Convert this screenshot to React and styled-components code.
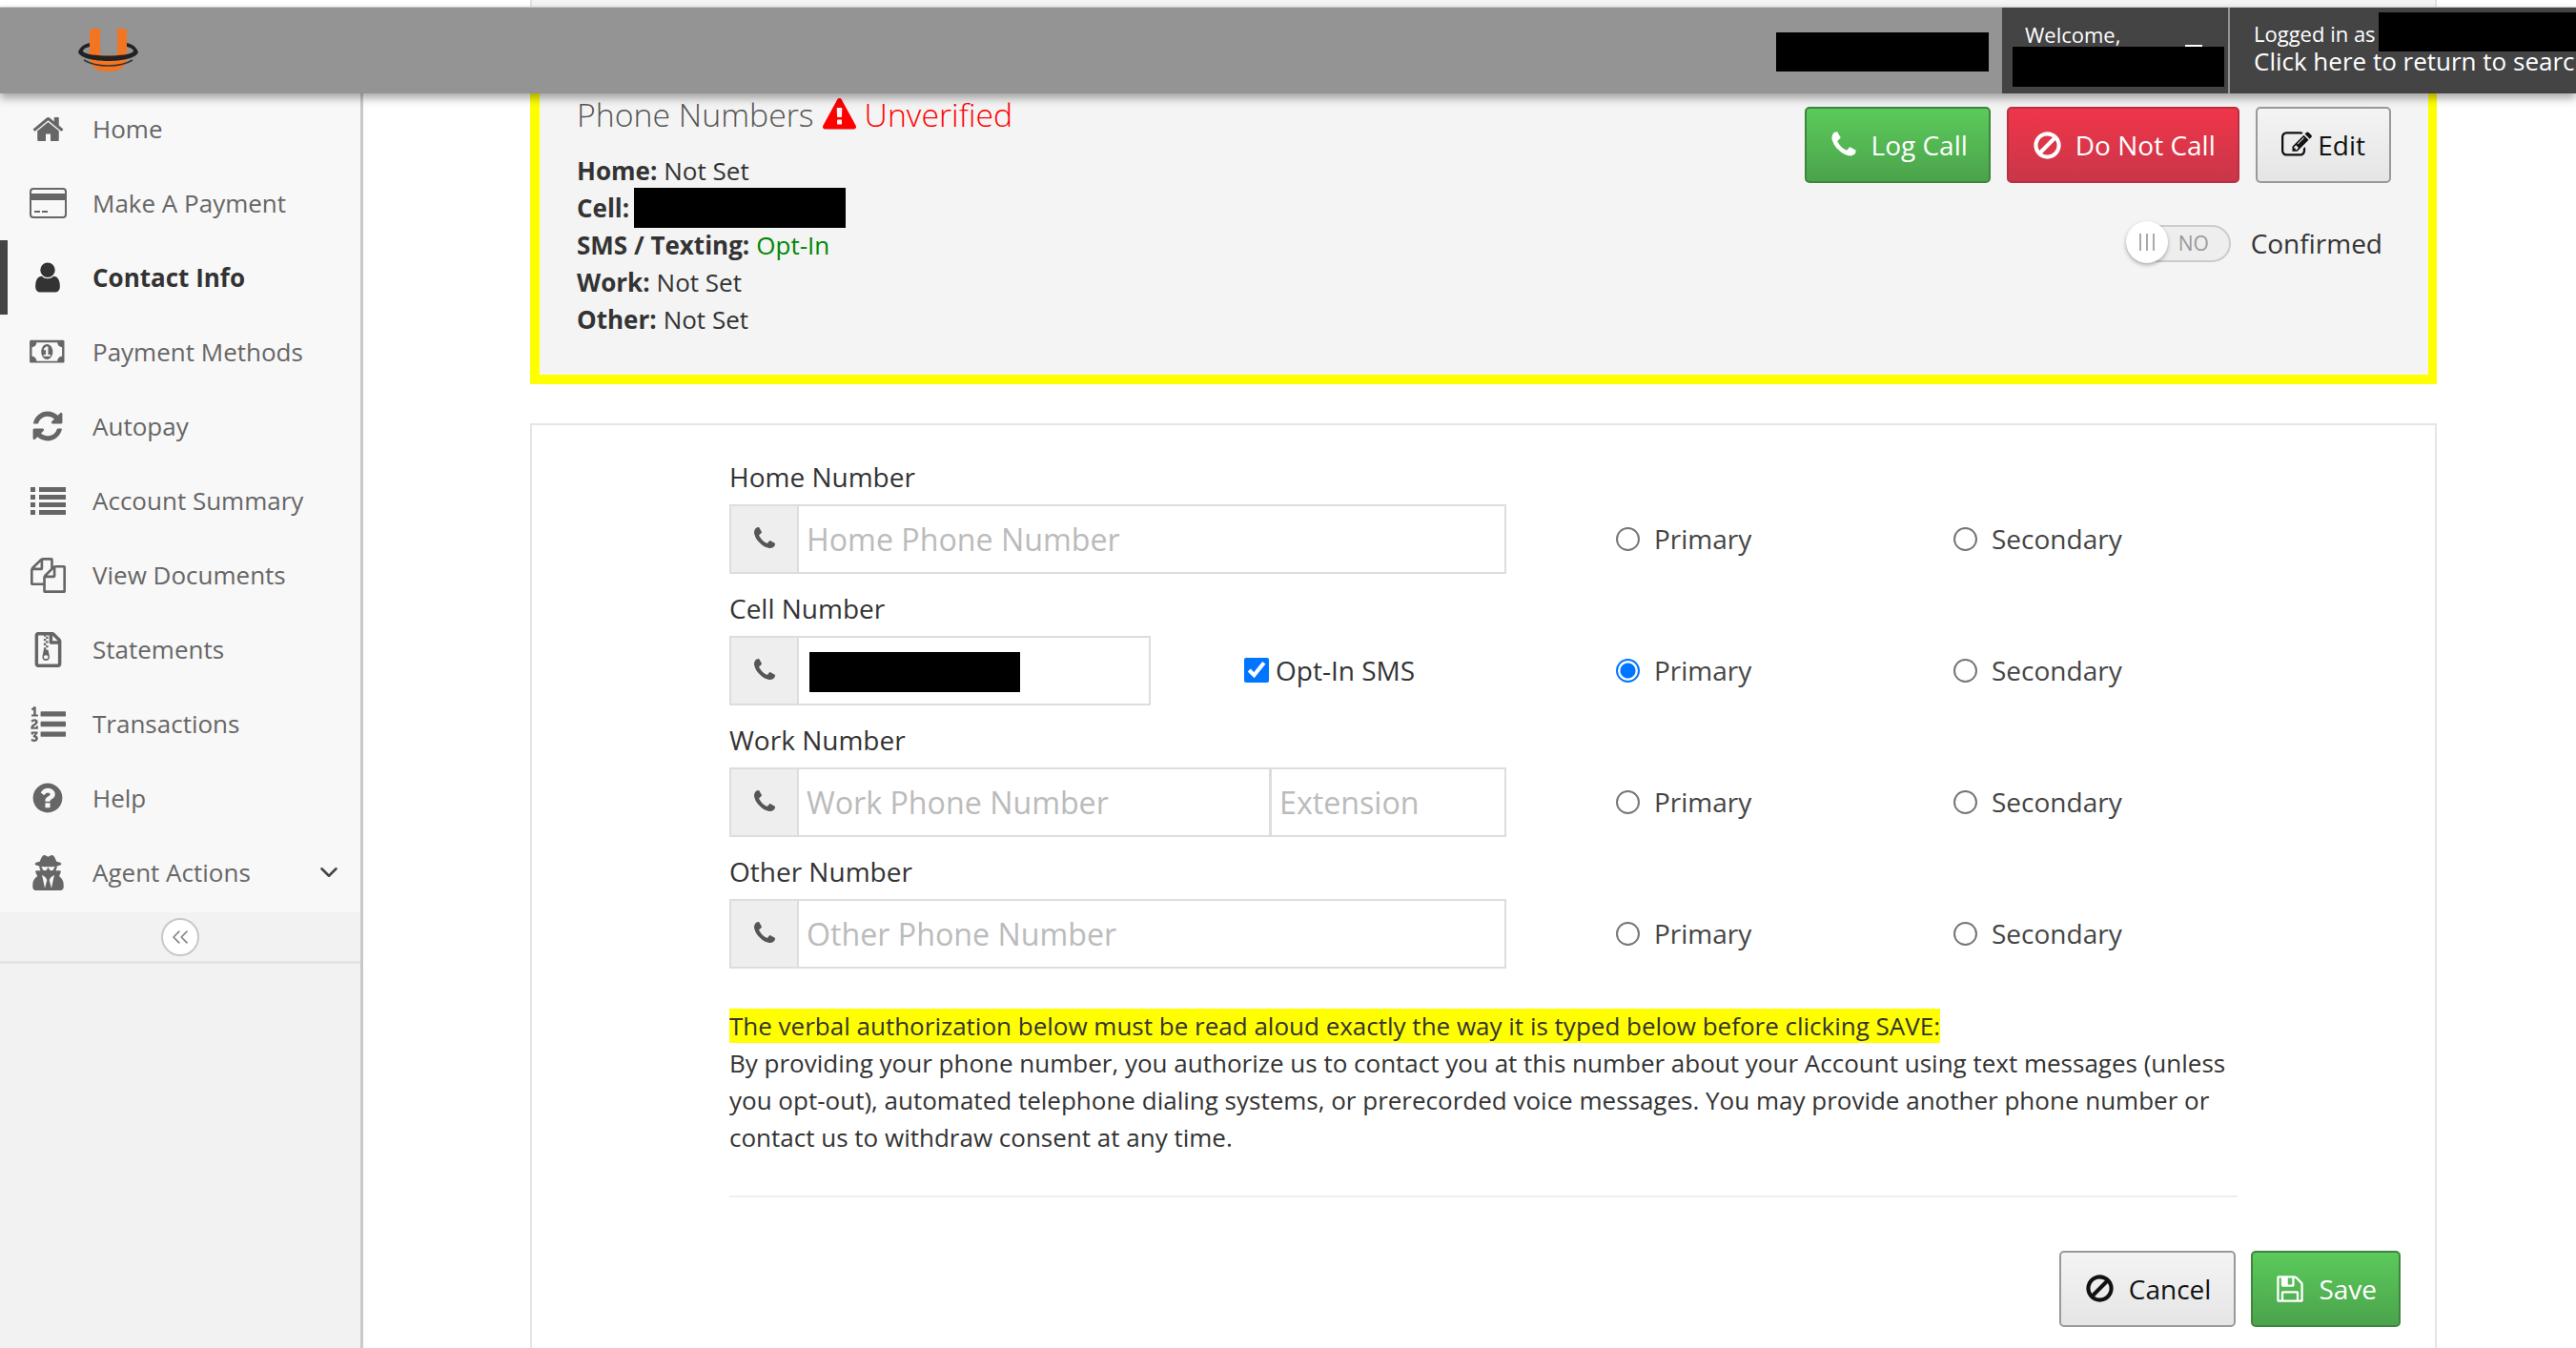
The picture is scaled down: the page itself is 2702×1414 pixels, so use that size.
import React from 'react'
import styled, { createGlobalStyle } from 'styled-components'
import { FaRegFileArchive, FaUserSecret } from 'react-icons/fa'
import { ChevronDown, ChevronsLeft } from 'lucide-react'

const GlobalStyle = createGlobalStyle`
  html, body {
    margin: 0;
    height: 1414px;
    overflow: hidden;
    background: #fff;
    font-family: "Open Sans", sans-serif;
    font-size: 28px;
    color: #333;
  }
  * { box-sizing: border-box; }
`

const Fa4 = ({ d, size = 32, color = 'currentColor' }) => (
  <svg width={size} height={size} viewBox="0 0 1792 1792" fill={color}>
    <path d={d} />
  </svg>
)

const paths = {
  home: 'M1472 992v480q0 26-19 45t-45 19h-384v-384h-256v384h-384q-26 0-45-19t-19-45v-480q0-1 .5-3t.5-3l575-474 575 474q1 2 1 6zm223-69l-62 74q-8 9-21 11h-3q-13 0-21-7l-692-577-692 577q-12 8-24 7-13-2-21-11l-62-74q-8-10-7-23.5t11-21.5l719-599q32-26 76-26t76 26l244 204v-195q0-14 9-23t23-9h192q14 0 23 9t9 23v408l219 182q10 8 11 21.5t-7 23.5z',
  user: 'M1536 1399q0 109-62.5 187t-150.5 78h-854q-88 0-150.5-78t-62.5-187q0-85 8.5-160.5t31.5-152 58.5-131 94-89 134.5-34.5q131 128 313 128t313-128q76 0 134.5 34.5t94 89 58.5 131 31.5 152 8.5 160.5zm-256-887q0 159-112.5 271.5t-271.5 112.5-271.5-112.5-112.5-271.5 112.5-271.5 271.5-112.5 271.5 112.5 112.5 271.5z',
  refresh: 'M1639 1056q0 5-1 7-64 268-268 434.5t-478 166.5q-146 0-282.5-55t-243.5-157l-129 129q-19 19-45 19t-45-19-19-45v-448q0-26 19-45t45-19h448q26 0 45 19t19 45-19 45l-137 137q71 66 161 102t187 36q134 0 250-65t186-179q11-17 53-117 8-23 30-23h192q13 0 22.5 9.5t9.5 22.5zm25-800v448q0 26-19 45t-45 19h-448q-26 0-45-19t-19-45 19-45l138-138q-148-137-349-137-134 0-250 65t-186 179q-11 17-53 117-8 23-30 23h-199q-13 0-22.5-9.5t-9.5-22.5v-7q65-268 270-434.5t480-166.5q146 0 284 55.5t245 156.5l130-129q19-19 45-19t45 19 19 45z',
  help: 'M1024 1376v-192q0-14-9-23t-23-9h-192q-14 0-23 9t-9 23v192q0 14 9 23t23 9h192q14 0 23-9t9-23zm256-672q0-88-55.5-163t-138.5-116-170-41q-243 0-371 213-15 24 8 42l132 100q7 6 19 6 16 0 25-12 53-68 86-92 34-24 86-24 48 0 85.5 26t37.5 59q0 38-20 61t-68 45q-63 28-115.5 86.5t-52.5 125.5v36q0 14 9 23t23 9h192q14 0 23-9t9-23q0-19 21.5-49.5t54.5-49.5q32-18 49-28.5t46-35 44.5-48 28-60.5 12.5-81zm384 192q0 209-103 385.5t-279.5 279.5-385.5 103-385.5-103-279.5-279.5-103-385.5 103-385.5 279.5-279.5 385.5-103 385.5 103 279.5 279.5 103 385.5z',
  ban: 'M1440 893q0-161-87-295l-754 753q137 89 297 89 111 0 211.5-43.5t173.5-116.5 116-174.5 43-212.5zm-999 299l755-754q-135-91-300-91-148 0-273 73t-198 199-73 274q0 162 89 299zm1223-299q0 157-61 300t-163.5 246-245 164-298.5 61-298.5-61-245-164-163.5-246-61-300 61-299.5 163.5-245.5 245-164 298.5-61 298.5 61 245 164 163.5 245.5 61 299.5z',
  edit: 'M888 1184l116-116-152-152-116 116v56h96v96h56zm440-720q-16-16-33 1l-350 350q-17 17-1 33t33-1l350-350q17-17 1-33zm80 594v190q0 119-84.5 203.5t-203.5 84.5h-832q-119 0-203.5-84.5t-84.5-203.5v-832q0-119 84.5-203.5t203.5-84.5h832q63 0 117 25 15 7 18 23 3 17-9 29l-49 49q-14 14-32 8-23-6-45-6h-832q-66 0-113 47t-47 113v832q0 66 47 113t113 47h832q66 0 113-47t47-113v-126q0-13 9-22l64-64q15-15 35-7t20 29zm-96-738l288 288-672 672h-288v-288zm444 132l-92 92-288-288 92-92q28-28 68-28t68 28l152 152q28 28 28 68t-28 68z',
  warning: 'M1024 1375v-190q0-14-9.5-23.5t-22.5-9.5h-192q-13 0-22.5 9.5t-9.5 23.5v190q0 14 9.5 23.5t22.5 9.5h192q13 0 22.5-9.5t9.5-23.5zm-2-374l18-459q0-12-10-19-13-11-24-11h-220q-11 0-24 11-10 7-10 21l17 457q0 10 10 16.5t24 6.5h185q14 0 23.5-6.5t10.5-16.5zm-14-934l768 1408q35 63-2 126-17 29-46.5 46t-63.5 17h-1536q-34 0-63.5-17t-46.5-46q-37-63-2-126l768-1408q17-31 47-49t65-18 65 18 47 49z',
  copy: 'M1696 384q40 0 68 28t28 68v1216q0 40-28 68t-68 28h-960q-40 0-68-28t-28-68v-288h-544q-40 0-68-28t-28-68v-672q0-40 20-88t48-76l408-408q28-28 76-48t88-20h416q40 0 68 28t28 68v328q68-40 128-40h416zm-544 213l-299 299h299v-299zm-640-384l-299 299h299v-299zm196 647l316-316v-416h-384v416q0 40-28 68t-68 28h-416v640h512v-256q0-40 20-88t48-76zm956 804v-1152h-384v416q0 40-28 68t-68 28h-416v640h896z',
  save: 'M512 1536h768v-384h-768v384zm896 0h128v-896q0-14-10-38.5t-20-34.5l-281-281q-10-10-34-20t-39-10v416q0 40-28 68t-68 28h-576q-40 0-68-28t-28-68v-416h-128v1280h128v-416q0-40 28-68t68-28h832q40 0 68 28t28 68v416zm-384-928v-320q0-13-9.5-22.5t-22.5-9.5h-192q-13 0-22.5 9.5t-9.5 22.5v320q0 13 9.5 22.5t22.5 9.5h192q13 0 22.5-9.5t9.5-22.5zm640 32v928q0 40-28 68t-68 28h-1344q-40 0-68-28t-28-68v-1344q0-40 28-68t68-28h928q40 0 88 20t76 48l280 280q28 28 48 76t20 88z',
  phone: 'M1600 1240q0 27-10 70.5t-21 68.5q-21 50-122 106-94 51-186 51-27 0-53-3.5t-57.5-12.5-47-14.5-55.5-20.5-49-18q-98-35-175-83-127-79-264-216t-216-264q-48-77-83-175-3-9-18-49t-20.5-55.5-14.5-47-12.5-57.5-3.5-53q0-92 51-186 56-101 106-122 25-11 68.5-21t70.5-10q14 0 21 3 18 6 53 76 11 19 30 54t35 63.5 31 53.5q3 4 17.5 25t21.5 35.5 7 28.5q0 20-28.5 50t-62 55-62 53-28.5 46q0 9 5 22.5t8.5 20.5 14 24 11.5 19q76 137 174 235t235 174q2 1 19 11.5t24 14 20.5 8.5 22.5 5q18 0 46-28.5t53-62 55-62 50-28.5q14 0 28.5 7t35.5 21.5 25 17.5q25 15 53.5 31t63.5 35 54 30q70 35 76 53 3 7 3 21z',
  listOl: 'M381 1620q0 80-54.5 126t-135.5 46q-106 0-172-66l57-88q49 45 106 45 29 0 50.5-14.5t21.5-42.5q0-64-105-56l-26-56q8-10 32.5-43.5t42.5-54 37-38.5v-1q-16 0-48.5 1t-48.5 1v53h-106v-152h333v88l-95 115q51 12 81 49t30 88zm2-627v159h-362q-6-36-6-54 0-51 23.5-93t56.5-68 66-47.5 56.5-43.5 23.5-45q0-25-14.5-38.5t-39.5-13.5q-46 0-81 58l-85-59q24-51 71.5-79.5t105.5-28.5q73 0 123 41.5t50 112.5q0 50-34 91.5t-75 64.5-75.5 50.5-35.5 52.5h127v-60h105zm1409 319v192q0 13-9.5 22.5t-22.5 9.5h-1216q-13 0-22.5-9.5t-9.5-22.5v-192q0-14 9-23t23-9h1216q13 0 22.5 9.5t9.5 22.5zm-1408-899v99h-335v-99h107q0-41 .5-122t.5-121v-12h-2q-8 17-50 54l-71-76 136-127h106v404h108zm1408 387v192q0 13-9.5 22.5t-22.5 9.5h-1216q-13 0-22.5-9.5t-9.5-22.5v-192q0-14 9-23t23-9h1216q13 0 22.5 9.5t9.5 22.5zm0-512v192q0 13-9.5 22.5t-22.5 9.5h-1216q-13 0-22.5-9.5t-9.5-22.5v-192q0-13 9.5-22.5t22.5-9.5h1216q13 0 22.5 9.5t9.5 22.5z',
  money: 'M768 1152h384v-96h-128v-448h-114l-148 137 77 80q42-37 55-57h2v288h-128v96zm512-256q0 70-21 142t-59.5 134-101.5 101-138 39-138-39-101.5-101-59.5-134-21-142 21-142 59.5-134 101.5-101 138-39 138 39 101.5 101 59.5 134 21 142zm512 256v-512q-106 0-181-75t-75-181h-1152q0 106-75 181t-181 75v512q106 0 181 75t75 181h1152q0-106 75-181t181-75zm128-832v1120q0 26-19 45t-45 19h-1792q-26 0-45-19t-19-45v-1120q0-26 19-45t45-19h1792q26 0 45 19t19 45z',
}

const CardIcon = () => (
  <svg width="39" height="32" viewBox="0 0 39 32" fill="none">
    <rect x="1" y="1" width="37" height="30" rx="3" stroke="currentColor" strokeWidth="2" />
    <rect x="1" y="6" width="37" height="7" fill="currentColor" />
    <rect x="5" y="24" width="6" height="2" fill="currentColor" />
    <rect x="13" y="24" width="6" height="2" fill="currentColor" />
  </svg>
)

const MoneyIcon = () => (
  <svg width="39" height="34" viewBox="0 0 2048 1792" fill="currentColor">
    <path fillRule="evenodd" d={paths.money} />
  </svg>
)

const ListIcon = () => (
  <svg width="37" height="29" viewBox="0 0 37 29" fill="currentColor">
    {[0, 8, 16, 24].map((y) => (
      <g key={y}>
        <rect y={y} width="5" height="5" />
        <rect x="9" y={y} width="28" height="5" />
      </g>
    ))}
  </svg>
)

const Page = styled.div`
  display: grid;
  grid-template-columns: 381px 1fr;
  min-height: 1414px;
`

const Header = styled.header`
  position: absolute;
  top: 7px;
  left: 0;
  width: 100%;
  height: 91px;
  display: flex;
  align-items: stretch;
  background: #949494;
  border-top: 1px solid #c8c8c8;
  box-shadow: 0 5px 9px rgba(0, 0, 0, 0.35);
  overflow: hidden;
  z-index: 5;
`

const Logo = styled.svg`
  width: 63px;
  height: 45px;
  margin: 22px 0 0 82px;
`

const Redaction = styled.div`
  background: #000;
  width: ${(p) => p.$w}px;
  height: ${(p) => p.$h}px;
  flex-shrink: 0;
`

const HeaderSearchBlock = styled(Redaction)`
  margin: 26px 14px 0 auto;
`

const WelcomeBox = styled.div`
  position: relative;
  width: 237px;
  background: #444;
  color: #fff;
  padding: 13px 0 0 11px;
  font-size: 22px;
  line-height: 30px;
`

const WelcomeText = styled.div`
  padding-left: 13px;
`

const WelcomeName = styled(Redaction)`
  margin-top: -2px;
`

const WelcomeDash = styled.span`
  position: absolute;
  top: 39px;
  left: 192px;
  width: 18px;
  height: 2px;
  background: #fff;
`

const LoggedBox = styled.div`
  position: relative;
  width: 363px;
  margin-left: 2px;
  background: #444;
  color: #fff;
  padding: 13px 0 0 25px;
  white-space: nowrap;
  overflow: hidden;
`

const LoggedLine = styled.div`
  font-size: 22px;
  line-height: 29px;
`

const ReturnLine = styled.div`
  font-size: 26px;
  line-height: 29px;
`

const LoggedName = styled(Redaction)`
  position: absolute;
  top: 5px;
  left: 156px;
`

const Sidebar = styled.aside`
  margin-top: 8px;
  display: flex;
  flex-direction: column;
  background: #f2f2f2;
  border-right: 3px solid #c9c9c9;
  padding-top: 88px;
  font-size: 26px;
`

const NavList = styled.nav`
  background: #f8f8f8;
  height: 861px;
`

const NavRow = styled.div`
  height: 78px;
  display: flex;
  align-items: center;
  color: ${(p) => (p.$active ? '#333' : '#666')};
  font-weight: ${(p) => (p.$active ? 700 : 400)};
  border-left: 8px solid ${(p) => (p.$active ? '#444' : 'transparent')};
  padding-right: 18px;
`

const NavIcon = styled.span`
  width: 88px;
  margin-left: -2px;
  display: flex;
  justify-content: center;
  color: ${(p) => (p.$active ? '#333' : '#666')};
  font-size: 37px;
`

const NavLabel = styled.span`
  flex: 1;
  margin-left: 3px;
`

const CollapseBand = styled.div`
  height: 54px;
  display: flex;
  align-items: center;
  justify-content: center;
  border-bottom: 3px solid #e4e4e4;
`

const CollapseButton = styled.div`
  width: 40px;
  height: 40px;
  border-radius: 50%;
  background: #fff;
  border: 2px solid #c8c8c8;
  color: #888;
  display: flex;
  align-items: center;
  justify-content: center;
`

const Main = styled.main`
  padding: 0 146px 0 175px;
`

const TopStub = styled.div`
  height: 40px;
  background: #f4f4f4;
  border: 2px solid #e3e3e3;
  border-top: 0;
`

const PhonePanel = styled.section`
  display: flex;
  justify-content: space-between;
  background: #f4f4f4;
  border: solid #ff0;
  border-width: 10px 9px 10px 10px;
  padding: 46px 39px 39px 39px;
`

const PanelTitle = styled.h3`
  margin: 0 0 15px;
  display: flex;
  align-items: center;
  gap: 9px;
  font-size: 33.8px;
  font-weight: 300;
  line-height: 48px;
  color: #555;
`

const Unverified = styled.span`
  color: #f00;
`

const InfoLine = styled.div`
  display: flex;
  align-items: center;
  gap: 7px;
  height: 39px;
  font-size: 26px;
  color: #333;
`

const Strong = styled.b`
  font-weight: 700;
`

const OptIn = styled.span`
  color: #080;
`

const CellBlock = styled(Redaction)`
  margin-left: -2px;
`

const PanelActions = styled.div`
  margin-top: 16px;
`

const ButtonRow = styled.div`
  display: flex;
  justify-content: flex-end;
  gap: 17px;
`

const Button = styled.button`
  height: 80px;
  display: flex;
  align-items: center;
  gap: ${(p) => p.$gap || 13}px;
  padding: 0 ${(p) => p.$pad || 27}px;
  font-family: inherit;
  font-size: 28px;
  border-radius: 5px;
  border: 2px solid #999;
  color: #111;
  background: linear-gradient(#f4f4f4, #e5e5e5);
`

const GreenButton = styled(Button)`
  color: #fff;
  border-color: #3e853e;
  background: linear-gradient(#5bca5b, #4ba34b);
`

const RedButton = styled(Button)`
  color: #fff;
  border-color: #b83042;
  background: linear-gradient(#f03549, #c93649);
`

const ConfirmRow = styled.div`
  display: flex;
  justify-content: flex-end;
  align-items: center;
  gap: 21px;
  margin-top: 42px;
  padding-right: 9px;
`

const Toggle = styled.div`
  position: relative;
  width: 110px;
  height: 39px;
  margin-top: 2px;
  border: 2px solid #ccc;
  border-radius: 20px;
  background: #eee;
  color: #999;
  font-size: 21px;
  line-height: 35px;
  padding-left: 53px;
`

const ToggleKnob = styled.div`
  position: absolute;
  top: -6px;
  left: -2px;
  width: 44px;
  height: 44px;
  border-radius: 50%;
  background: #fff;
  box-shadow: 0 2px 4px rgba(0, 0, 0, 0.3);
  display: flex;
  align-items: center;
  justify-content: center;
  gap: 5px;
`

const KnobBar = styled.span`
  width: 2px;
  height: 18px;
  background: #aaa;
`

const FormCard = styled.section`
  margin-top: 41px;
  min-height: 970px;
  border: 2px solid #e5e5e5;
  border-bottom: 0;
  background: #fff;
  padding-top: 35px;
`

const FormBody = styled.div`
  padding: 0 207px;
`

const Field = styled.div`
  margin-bottom: 17.5px;
`

const FieldLabel = styled.div`
  line-height: 39px;
  margin-bottom: 8.5px;
  color: #333;
`

const FieldRow = styled.div`
  display: grid;
  grid-template-columns: 930px 354px 1fr;
  align-items: center;
`

const NumberCell = styled.div`
  display: flex;
  align-items: center;
`

const InputGroup = styled.div`
  width: ${(p) => p.$width}px;
  height: 73px;
  display: flex;
  border: 2px solid #ddd;
`

const PhoneAddon = styled.div`
  width: 71px;
  flex-shrink: 0;
  display: flex;
  align-items: center;
  justify-content: center;
  background: #eee;
  border-right: 2px solid #ddd;
  color: #555;
`

const PhoneInput = styled.input`
  flex: ${(p) => (p.$fixed ? `0 0 ${p.$fixed}px` : '1')};
  min-width: 0;
  border: 0;
  border-left: ${(p) => (p.$divided ? '3px solid #ddd' : '0')};
  padding: 0 8px;
  font-family: inherit;
  font-size: 32.2px;
  outline: 0;
  &::placeholder {
    color: #bbb;
    opacity: 1;
  }
`

const FilledNumber = styled.div`
  display: flex;
  align-items: center;
  padding: 3px 0 0 11px;
`

const OptInLabel = styled.label`
  display: flex;
  align-items: center;
  gap: 7px;
  margin-left: 98px;
`

const CheckBox = styled.input`
  width: 26px;
  height: 26px;
  margin: 0;
  accent-color: #0075ff;
`

const RadioLabel = styled.label`
  display: flex;
  align-items: center;
  gap: 15px;
  color: #444;
`

const Radio = styled.input`
  appearance: none;
  width: 25px;
  height: 25px;
  margin: 0;
  border-radius: 50%;
  border: 2px solid #767676;
  background: #fff;
  &:checked {
    border-color: #0075ff;
    background: radial-gradient(circle, #0075ff 0 7.5px, #fff 8.5px);
  }
`

const Notice = styled.div`
  margin-top: 41px;
  font-size: 26px;
  line-height: 39px;
  color: #333;
`

const Highlight = styled.span`
  background: #ff0;
`

const Divider = styled.hr`
  margin: 41px 0 0;
  border: 0;
  height: 2px;
  background: #eee;
`

const FormFooter = styled.div`
  display: flex;
  justify-content: flex-end;
  gap: 16px;
  margin-top: 56px;
  padding-right: 36px;
`

const navItems = [
  { label: 'Home', icon: <Fa4 d={paths.home} size={35} /> },
  { label: 'Make A Payment', icon: <CardIcon /> },
  { label: 'Contact Info', icon: <Fa4 d={paths.user} size={36} />, active: true },
  { label: 'Payment Methods', icon: <MoneyIcon /> },
  { label: 'Autopay', icon: <Fa4 d={paths.refresh} size={36} /> },
  { label: 'Account Summary', icon: <ListIcon /> },
  { label: 'View Documents', icon: <Fa4 d={paths.copy} size={37} /> },
  { label: 'Statements', icon: <FaRegFileArchive /> },
  { label: 'Transactions', icon: <Fa4 d={paths.listOl} size={37} /> },
  { label: 'Help', icon: <Fa4 d={paths.help} size={36} /> },
  { label: 'Agent Actions', icon: <FaUserSecret />, arrow: true },
]

function PhoneField({ label, name, children, checked, side }) {
  return (
    <Field>
      <FieldLabel>{label}</FieldLabel>
      <FieldRow>
        <NumberCell>
          {children}
          {side}
        </NumberCell>
        <RadioLabel>
          <Radio type="radio" name={name} defaultChecked={checked} />
          Primary
        </RadioLabel>
        <RadioLabel>
          <Radio type="radio" name={name} />
          Secondary
        </RadioLabel>
      </FieldRow>
    </Field>
  )
}

function Addon() {
  return (
    <PhoneAddon>
      <Fa4 d={paths.phone} size={28} />
    </PhoneAddon>
  )
}

export default function App() {
  return (
    <>
      <GlobalStyle />
      <Header>
        <Logo viewBox="0 0 63 45">
          <path d="M12 3q0-3 3-3h8v28h18V0h7q3 0 3 3v28q-1 14-19.500 14T12 31z" fill="#f47521" />
          <path d="M0 25C2 18 8 16 12 15v4C7 20 5 22 5 24c5 6 48 6 53 0 0-2-2-4-7-5v-4c4 1 10 3 12 10-5 12-58 12-63 0z" fill="#222" />
          <path d="M6 33c13 8 38 8 51 0" fill="none" stroke="#333" strokeWidth="1.500" />
        </Logo>
        <HeaderSearchBlock $w={223} $h={41} />
        <WelcomeBox>
          <WelcomeText>Welcome,</WelcomeText>
          <WelcomeName $w={222} $h={42} />
          <WelcomeDash />
        </WelcomeBox>
        <LoggedBox>
          <LoggedLine>Logged in as</LoggedLine>
          <ReturnLine>Click here to return to search</ReturnLine>
          <LoggedName $w={210} $h={41} />
        </LoggedBox>
      </Header>
      <Page>
        <Sidebar>
          <NavList>
            {navItems.map((item) => (
              <NavRow key={item.label} $active={item.active}>
                <NavIcon $active={item.active}>{item.icon}</NavIcon>
                <NavLabel>{item.label}</NavLabel>
                {item.arrow && <ChevronDown size={30} color="#444" />}
              </NavRow>
            ))}
          </NavList>
          <CollapseBand>
            <CollapseButton>
              <ChevronsLeft size={28} strokeWidth={1.5} />
            </CollapseButton>
          </CollapseBand>
        </Sidebar>
        <Main>
          <TopStub />
          <PhonePanel>
            <div>
              <PanelTitle>
                Phone Numbers
                <Fa4 d={paths.warning} size={35} color="#f00" />
                <Unverified>Unverified</Unverified>
              </PanelTitle>
              <InfoLine><Strong>Home:</Strong> Not Set</InfoLine>
              <InfoLine><Strong>Cell:</Strong> <CellBlock $w={222} $h={42} /></InfoLine>
              <InfoLine><Strong>SMS / Texting:</Strong> <OptIn>Opt-In</OptIn></InfoLine>
              <InfoLine><Strong>Work:</Strong> Not Set</InfoLine>
              <InfoLine><Strong>Other:</Strong> Not Set</InfoLine>
            </div>
            <PanelActions>
              <ButtonRow>
                <GreenButton $pad={22.5}><Fa4 d={paths.phone} size={32} />Log Call</GreenButton>
                <RedButton $pad={23.5}><Fa4 d={paths.ban} size={33} />Do Not Call</RedButton>
                <Button $pad={25} $gap={6}><Fa4 d={paths.edit} size={32} />Edit</Button>
              </ButtonRow>
              <ConfirmRow>
                <Toggle>
                  <ToggleKnob><KnobBar /><KnobBar /><KnobBar /></ToggleKnob>
                  NO
                </Toggle>
                Confirmed
              </ConfirmRow>
            </PanelActions>
          </PhonePanel>
          <FormCard>
            <FormBody>
              <PhoneField label="Home Number" name="home">
                <InputGroup $width={815}>
                  <Addon />
                  <PhoneInput placeholder="Home Phone Number" />
                </InputGroup>
              </PhoneField>
              <PhoneField
                label="Cell Number"
                name="cell"
                checked
                side={
                  <OptInLabel>
                    <CheckBox type="checkbox" defaultChecked />
                    Opt-In SMS
                  </OptInLabel>
                }
              >
                <InputGroup $width={442}>
                  <Addon />
                  <FilledNumber><Redaction $w={221} $h={42} /></FilledNumber>
                </InputGroup>
              </PhoneField>
              <PhoneField label="Work Number" name="work">
                <InputGroup $width={815}>
                  <Addon />
                  <PhoneInput placeholder="Work Phone Number" />
                  <PhoneInput $fixed={247} $divided placeholder="Extension" />
                </InputGroup>
              </PhoneField>
              <PhoneField label="Other Number" name="other">
                <InputGroup $width={815}>
                  <Addon />
                  <PhoneInput placeholder="Other Phone Number" />
                </InputGroup>
              </PhoneField>
              <Notice>
                <Highlight>The verbal authorization below must be read aloud exactly the way it is typed below before clicking SAVE:</Highlight>
                <br />
                By providing your phone number, you authorize us to contact you at this number about your Account using text messages (unless you opt-out), automated telephone dialing systems, or prerecorded voice messages. You may provide another phone number or contact us to withdraw consent at any time.
              </Notice>
              <Divider />
            </FormBody>
            <FormFooter>
              <Button $pad={24} $gap={14}><Fa4 d={paths.ban} size={33} />Cancel</Button>
              <GreenButton $pad={23} $gap={14}><Fa4 d={paths.save} size={32} />Save</GreenButton>
            </FormFooter>
          </FormCard>
        </Main>
      </Page>
    </>
  )
}
